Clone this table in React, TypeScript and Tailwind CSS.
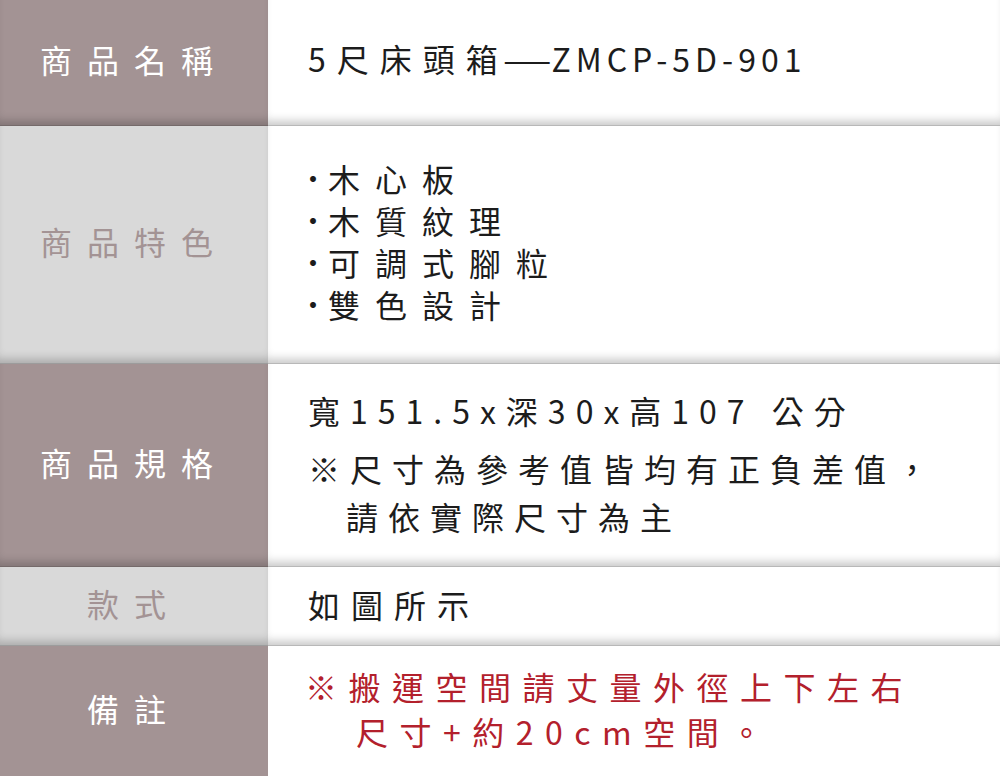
import React from 'react'

const FONT = "font-['Noto_Sans_CJK_TC','Noto_Sans_CJK_SC',sans-serif]"

// row separator: soft inset shadow at the bottom + darker hairline
const SEP = 'shadow-[inset_0_-9px_10px_-5px_rgba(0,0,0,0.22)] border-b border-[rgba(0,0,0,0.28)]'

type Tone = 'mauve' | 'gray'

function Label({ tone, text, last }: { tone: Tone; text: string; last?: boolean }) {
  const toneCls = tone === 'mauve' ? 'bg-[#a39394] text-white' : 'bg-[#d9d9d9] text-[#a39394]'
  return (
    <div
      className={[
        'w-[268px] shrink-0 flex items-center justify-center text-[32px] tracking-[15px] pb-[7px]',
        toneCls,
        last ? '' : SEP,
      ].join(' ')}
    >
      {text}
    </div>
  )
}

function Row({
  h,
  tone,
  label,
  last,
  children,
}: {
  h: string
  tone: Tone
  label: string
  last?: boolean
  children: React.ReactNode
}) {
  return (
    <div className={`flex ${h}`}>
      <Label tone={tone} text={label} last={last} />
      <div className={`flex-1 flex items-center bg-white pl-[40px] ${last ? '' : SEP}`}>
        <div>{children}</div>
      </div>
    </div>
  )
}

const features = ['木心板', '木質紋理', '可調式腳粒', '雙色設計']

export default function App() {
  return (
    <div className={`w-[1000px] h-[777px] overflow-hidden bg-white ${FONT}`}>
      <div className="border-t border-[#cdc4c5] w-[268px]" />
      <div className="flex h-[126px] -mt-px">
        <Label tone="mauve" text="商品名稱" />
        <div className={`flex-1 flex items-center bg-white pl-[40px] ${SEP}`}>
          <div className="text-[32px] text-[#1c1c1c] leading-none pb-[9px]">
            <span className="tracking-[11px]">5尺床頭箱</span>
            <span className="inline-block scale-x-[1.75] tracking-normal ml-[4px] mr-[10px]">—</span>
            <span className="tracking-[5px]">ZMCP-5D-901</span>
          </div>
        </div>
      </div>

      <Row h="h-[238px]" tone="gray" label="商品特色">
        <ul className="text-[32px] leading-[42px] text-[#1c1c1c] pb-[7px]">
          {features.map((f) => (
            <li key={f} className="flex items-center">
              <span className="inline-block w-[20px] text-[28px]">
                <span className="inline-block -ml-[9px]">·</span>
              </span>
              <span className="tracking-[15px]">{f}</span>
            </li>
          ))}
        </ul>
      </Row>

      <Row h="h-[203px]" tone="mauve" label="商品規格">
        <div className="text-[32px] text-[#1c1c1c] tracking-[10px] pb-[5px]">
          <p className="leading-[48px] mb-[10px]">寬151.5x深30x高107 公分</p>
          <p className="leading-[48px]">※尺寸為參考值皆均有正負差值，</p>
          <p className="leading-[48px] pl-[38px]">請依實際尺寸為主</p>
        </div>
      </Row>

      <Row h="h-[79px]" tone="gray" label="款式">
        <p className="text-[32px] text-[#1c1c1c] tracking-[11px] leading-none pb-[4px]">如圖所示</p>
      </Row>

      <Row h="h-[130px]" tone="mauve" label="備註" last>
        <div className="text-[32px] text-[#b3202c] tracking-[11.5px] pb-[4px] -ml-[3px]">
          <p className="leading-[45px]">※搬運空間請丈量外徑上下左右</p>
          <p className="leading-[45px] pl-[51px]">尺寸+約20cm空間。</p>
        </div>
      </Row>
    </div>
  )
}
